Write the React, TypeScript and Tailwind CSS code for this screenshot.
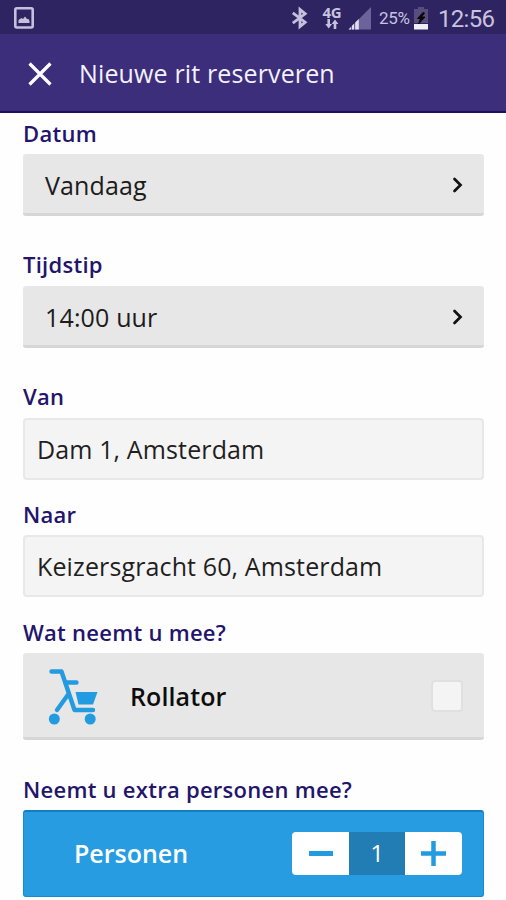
import type { ReactNode } from "react";

function Label({ children }: { children: ReactNode }) {
  return (
    <div className="h-9 text-[22px] leading-[30px] font-semibold tracking-[0.27px] whitespace-nowrap text-[#23146c]">
      {children}
    </div>
  );
}

function PickerButton({ children }: { children: ReactNode }) {
  return (
    <button
      type="button"
      className="flex h-[62px] w-full items-center justify-between rounded-[3px] border-b-[3px] border-[#d6d6d6] bg-[#e7e7e7] pt-[5px] pr-5 pl-[22px] text-[25px] tracking-[0.15px] text-[#1c1c1c]"
    >
      <span>{children}</span>
      <svg className="-mt-[3px]" width="12" height="18" viewBox="0 0 12 18" fill="none" stroke="#111" strokeWidth="2.7">
        <path d="M2.5 3 8.5 9l-6 6" strokeLinecap="round" />
      </svg>
    </button>
  );
}

function AddressField({ children }: { children: ReactNode }) {
  return (
    <div className="flex h-[62px] items-center rounded-[4px] border-2 border-[#e8e8e8] bg-[#f4f4f4] pt-px pl-3 text-[25px] tracking-[0.13px] whitespace-nowrap text-[#1f1f1f]">
      {children}
    </div>
  );
}

function StatusBar() {
  return (
    <div className="flex h-[34px] items-center bg-[#2e2462] pl-[14px] font-['Roboto',sans-serif] text-[#c8c3df]">
      <svg className="mt-[2px]" width="20" height="22" viewBox="0 0 20 22">
        <rect x="1.3" y="1.3" width="17.4" height="19.2" rx="1.5" fill="none" stroke="#c5c0db" strokeWidth="2.6" />
        <path d="M4.5 16v-3l3-2 1.5 1 2-2.5 2 2.5h1.5l1 2v2z" fill="#c5c0db" />
      </svg>
      <svg className="mt-[2px] ml-[257px]" width="18" height="24" viewBox="0 0 18 24" fill="none" stroke="#c5c0db" strokeWidth="2.8">
        <path d="m1.8 6.8 12.4 9.4L9 20.5v-17l5.2 4.3-12.4 9.4" />
      </svg>
      <div className="ml-[13px] flex w-[20px] flex-col items-center">
        <span className="mt-[1px] font-['Open_Sans',sans-serif] text-[15px] leading-[13px] font-bold tracking-[-0.3px]">4G</span>
        <svg width="14" height="10" viewBox="0 0 14 10" fill="none" stroke="#c5c0db" strokeWidth="2.6">
          <path d="M3.7 0v6M10 4v6" />
          <path d="M0.3 5h6.8L3.7 9.5zM6.6 5H13.4L10 .5z" fill="#c5c0db" stroke="none" />
        </svg>
      </div>
      <svg className="mt-[2px] ml-[6px]" width="24" height="24" viewBox="0 0 24 24">
        <path d="M.5 23.5H23V1z" fill="#6c639a" />
        <path d="M.5 23.5 3 21v2.5zM4 23.5v-3.7l2-2v5.7zM7.2 23.5v-7l3.6-3.6v10.6z" fill="#e2deef" />
      </svg>
      <span className="mt-[3px] ml-[7px] w-[34px] text-[17px] tracking-[-0.3px] whitespace-nowrap">25%</span>
      <svg className="mt-[2px] ml-px" width="14" height="24" viewBox="0 0 14 24">
        <path d="M0 3h4V1h6v2h4v14H0z" fill="#574d7e" />
        <path d="M0 18h14v5.5H0z" fill="#f1eff6" />
        <path d="m9 6.5-5.5 6h3L4.5 18l6.5-7H7.5l3-4z" fill="#080808" stroke="#080808" />
      </svg>
      <span className="mt-[3px] ml-[10px] text-[24px] leading-none tracking-[-0.7px] whitespace-nowrap">12:56</span>
    </div>
  );
}

function RollatorIcon() {
  return (
    <svg className="mt-[2px] ml-[24px]" width="52" height="58" viewBox="0 0 52 58" fill="none" stroke="#239be0" strokeWidth="4.4" strokeLinecap="round" strokeLinejoin="round">
      <path d="M4.5 4.5H14.5L27.5 43H46" />
      <path d="M18.5 15.5H29.5M21.5 27 10 43" />
      <path d="M28.5 25H50.5L46 37.5H31.5z" fill="#239be0" stroke="none" />
      <circle cx="7.3" cy="52" r="5.5" fill="#239be0" stroke="none" />
      <circle cx="43.2" cy="52" r="5.5" fill="#239be0" stroke="none" />
    </svg>
  );
}

export default function App() {
  return (
    <div className="h-[900px] w-[506px] overflow-hidden bg-[#fefefe] font-['Open_Sans',sans-serif]">
      <StatusBar />
      <header className="flex h-[79px] items-center border-b-2 border-[#1d0e62] bg-[#3c2e7b] pl-[27px] text-[#f3f1fb]">
        <svg className="mt-[2px]" width="26" height="26" viewBox="0 0 26 26" stroke="#fff" strokeWidth="3.2">
          <path d="m2.5 2.5 21 21M23.5 2.5l-21 21" />
        </svg>
        <h1 className="mt-[3px] ml-[26px] text-[25px] tracking-[0.14px] whitespace-nowrap">Nieuwe rit reserveren</h1>
      </header>
      <main className="pt-[5px] pr-[22px] pl-[23px]">
        <Label>Datum</Label>
        <PickerButton>Vandaag</PickerButton>
        <div className="mt-[33px] mb-px">
          <Label>Tijdstip</Label>
        </div>
        <PickerButton>14:00 uur</PickerButton>
        <div className="mt-[33px] mb-px">
          <Label>Van</Label>
        </div>
        <AddressField>Dam 1, Amsterdam</AddressField>
        <div className="mt-[19px]">
          <Label>Naar</Label>
        </div>
        <AddressField>Keizersgracht 60, Amsterdam</AddressField>
        <div className="mt-5">
          <Label>Wat neemt u mee?</Label>
        </div>
        <div className="flex h-[87px] items-center rounded-[3px] border-b-[3px] border-[#d6d6d6] bg-[#e7e7e7] pr-[21px]">
          <RollatorIcon />
          <span className="mt-[4px] ml-[31px] text-[25px] font-semibold tracking-[0.1px] text-[#0d0d0d]">Rollator</span>
          <span className="mt-px ml-auto size-[32px] rounded-[4px] border-2 border-[#e0e0e0] bg-[#f4f4f4]" />
        </div>
        <div className="mt-[34px]">
          <Label>Neemt u extra personen mee?</Label>
        </div>
        <div className="flex h-[87px] items-center rounded-[3px] border border-t-2 border-[#168bcf] border-t-[#127fc1] bg-[#289ce1] pr-[21px] pl-[50px] text-white">
          <span className="text-[25px] font-semibold">Personen</span>
          <div className="mb-[2px] ml-auto flex h-[43px] w-[170px] overflow-hidden rounded-[4px]">
            <button type="button" className="flex w-[57px] items-center justify-center bg-white">
              <span className="h-[5px] w-[24px] bg-[#239be0]" />
            </button>
            <span className="flex w-[56px] items-center justify-center bg-[#217db4] text-[24px]">1</span>
            <button type="button" className="flex w-[57px] items-center justify-center bg-white">
              <svg width="25" height="25" viewBox="0 0 25 25" stroke="#239be0" strokeWidth="4.5">
                <path d="M12.5 0v25M0 12.5h25" />
              </svg>
            </button>
          </div>
        </div>
      </main>
    </div>
  );
}
